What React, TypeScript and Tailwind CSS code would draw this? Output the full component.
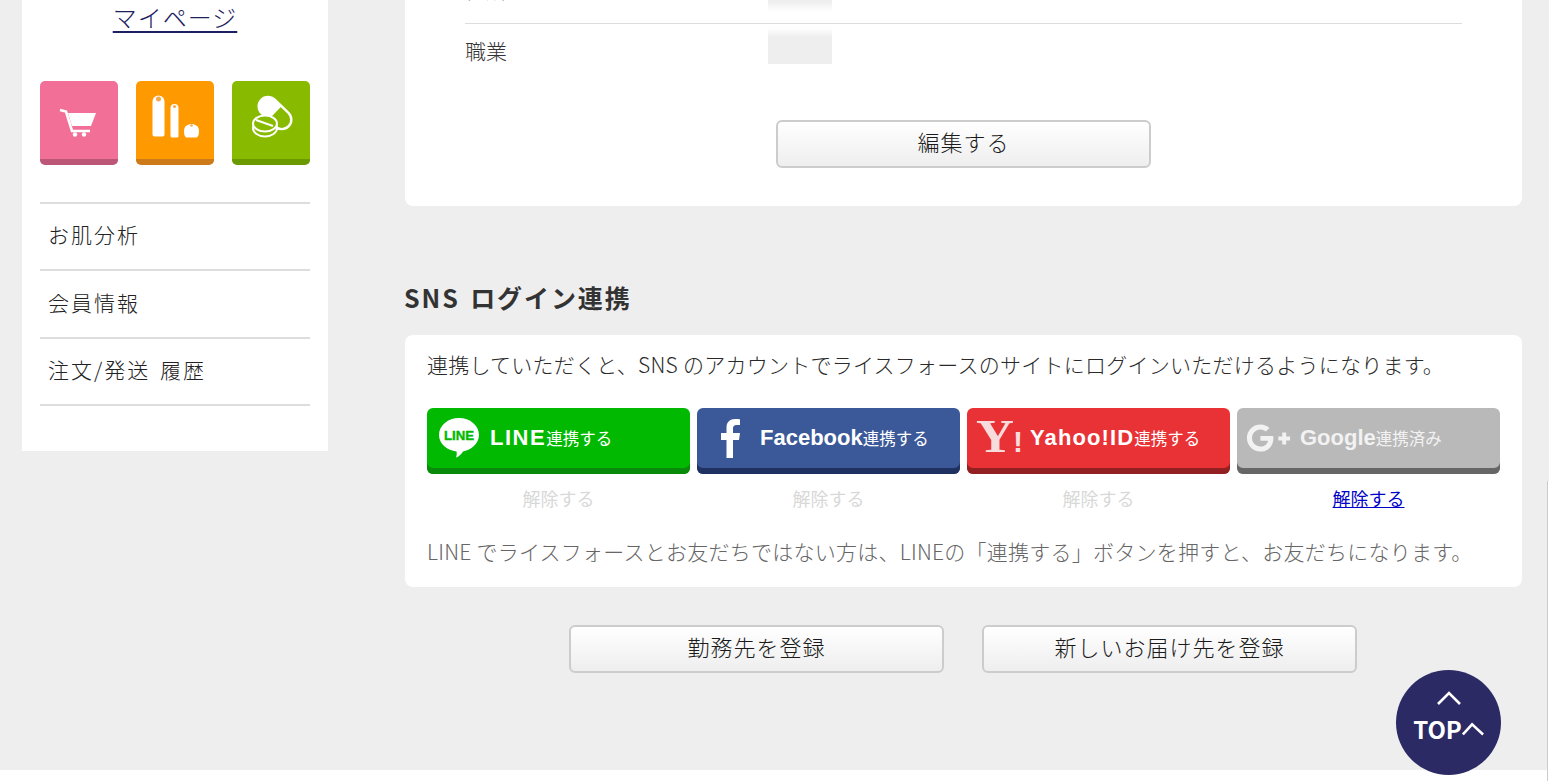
import { FaGooglePlusG } from 'react-icons/fa'

const CartIcon = () => (
  <svg viewBox="0 0 78 78" className="w-[78px] h-[78px]">
    <path d="M28 32H56L51 45H32Z" fill="#fff" />
    <path d="M20 29L26 30.500L32 50H50" fill="none" stroke="#fff" strokeWidth="2.600" />
    <circle cx="35" cy="53.500" r="2.200" fill="#fff" />
    <circle cx="44" cy="53.500" r="2.200" fill="#fff" />
  </svg>
)

const BottlesIcon = () => (
  <svg viewBox="0 0 78 78" className="w-[78px] h-[78px]">
    <path d="M16.500 20.500A6 6 0 0 1 28.500 20.500V53.500Q28.500 55.500 26.500 55.500H18.500Q16.500 55.500 16.500 53.500Z" fill="#fff" />
    <circle cx="22.500" cy="18" r="2.500" fill="#f5a94a" />
    <path d="M34.500 27A4 4 0 0 1 42.500 27V55Q42.500 56.500 41 56.500H36Q34.500 56.500 34.500 55Z" fill="#fff" />
    <circle cx="38.500" cy="25.500" r="1.500" fill="#f5a94a" />
    <path d="M48 50C48 45 52 43 55.500 43C59 43 63 45 63 50C63 54 62 56.500 60 56.500H51C49 56.500 48 54 48 50Z" fill="#fff" />
    <circle cx="55.500" cy="44.500" r="1.300" fill="#f5a94a" />
  </svg>
)

const PillsIcon = () => (
  <svg viewBox="0 0 78 78" className="w-[78px] h-[78px]">
    <g transform="rotate(44 43 32)">
      <rect x="24" y="22.500" width="38" height="19" rx="9.500" fill="#88bb00" stroke="#fff" strokeWidth="2.400" />
      <path d="M43 22.500H33.500A9.500 9.500 0 0 0 33.500 41.500H43Z" fill="#fff" />
    </g>
    <ellipse cx="33" cy="47" rx="12" ry="8.500" fill="#88bb00" stroke="#fff" strokeWidth="2" />
    <ellipse cx="33" cy="42.500" rx="12" ry="8" fill="#88bb00" stroke="#fff" strokeWidth="2" />
    <path d="M24 39L41 45" stroke="#fff" strokeWidth="2" />
  </svg>
)

const LineLogo = () => (
  <svg viewBox="0 0 44 44" className="w-[44px] h-[44px]">
    <path d="M22 2C33 2 42 9.500 42 19C42 28 33 34.500 26 35.500C25 37.500 21.500 41 19 41.500C19.800 39 20 37.500 19.500 35.500C10.500 34.500 2 28 2 19C2 9.500 11 2 22 2Z" fill="#fff" />
    <text x="22" y="24" textAnchor="middle" fontFamily="Liberation Sans" fontWeight="700" fontSize="13" fill="#00b900" stroke="#00b900" strokeWidth="0.400" textLength="30" lengthAdjust="spacingAndGlyphs">LINE</text>
  </svg>
)

const FacebookMark = () => (
  <svg viewBox="0 0 19 39" className="ml-[24px] mr-[20px] h-[39px] w-[19px]">
    <path d="M12 39V21H18L19 14H12V9.500C12 7.500 13 6 15.500 6H19V.3C18 .2 16 0 14 0C9 0 5.500 3 5.500 8.500V14H0V21H5.500V39Z" fill="#fff" />
  </svg>
)

const YahooMark = () => (
  <svg viewBox="0 0 48 36" className="ml-[9px] mr-[6px] h-9 w-12 overflow-visible">
    <text x="0" y="32" fontFamily="Liberation Serif" fontWeight="700" fontSize="46" fill="#f8dcdc" textLength="38" lengthAdjust="spacingAndGlyphs">Y</text>
    <text x="37" y="32" fontFamily="Liberation Sans" fontWeight="700" fontSize="30" fill="#f8dcdc">!</text>
  </svg>
)

const FormButton = ({ label }: { label: string }) => (
  <button className="h-12 w-[375px] rounded-md border-2 border-[#cccccc] bg-gradient-to-b from-white to-[#eeeeee] pb-[5px] text-[22px] font-light tracking-[1px] text-[#1a1a1a]">
    {label}
  </button>
)

type SnsProps = {
  bg: string
  icon: React.ReactNode
  name: string
  nameClass?: string
  suffix: string
  muted?: boolean
}

const SnsButton = ({ bg, icon, name, nameClass, suffix, muted }: SnsProps) => (
  <div>
    <div className={`${bg} relative flex h-[66px] items-center rounded-md pb-[6px] text-white`}>
      {icon}
      <span className={`font-['Liberation_Sans',sans-serif] text-[22px] font-bold leading-none ${nameClass ?? ''} ${muted ? 'text-[#f2f2f2]' : ''}`}>{name}</span>
      <span className={`text-[16.500px] leading-none ${muted ? 'text-[#f2f2f2]' : ''}`}>{suffix}</span>
    </div>
    <div className="mt-[13px] text-center text-[18px] leading-[22px]">
      {muted ? <a className="text-[#0000c8] underline">解除する</a> : <span className="text-[#d8d8d8]">解除する</span>}
    </div>
  </div>
)

export default function App() {
  return (
    <div className="relative flex h-[781px] w-full flex-col overflow-hidden bg-white font-['Noto_Sans_CJK_JP','Liberation_Sans',sans-serif] text-[#333333]">
      <div className="flex h-[770px] bg-[#eeeeee]">
        {/* sidebar */}
        <aside className="ml-[22px] h-[451px] w-[306px] bg-white px-[18px]">
          <div className="text-center">
            <a className="text-[24px] font-light leading-[34px] tracking-[1px] text-[#1d2060] underline underline-offset-[4px]">マイページ</a>
          </div>
          <div className="mt-[47px] flex gap-[18px]">
            <div className="w-[78px] h-[84px] rounded-[5px] bg-[#f27097] border-b-[6px] border-[#bc5677] overflow-hidden"><CartIcon /></div>
            <div className="w-[78px] h-[84px] rounded-[5px] bg-[#ff9900] border-b-[6px] border-[#cc7a1a] overflow-hidden"><BottlesIcon /></div>
            <div className="w-[78px] h-[84px] rounded-[5px] bg-[#88bb00] border-b-[6px] border-[#6a9a00] overflow-hidden"><PillsIcon /></div>
          </div>
          <ul className="mt-[37px] border-t-2 border-[#dddddd]">
            <li className="flex h-[67px] items-center border-b-2 border-[#dddddd] pb-[3px] pl-2 text-[21px] font-light tracking-[2px] text-[#222222]">お肌分析</li>
            <li className="flex h-[68px] items-center border-b-2 border-[#dddddd] pb-[3px] pl-2 text-[21px] font-light tracking-[2px] text-[#222222]">会員情報</li>
            <li className="flex h-[67px] items-center border-b-2 border-[#dddddd] pb-[3px] pl-2 text-[21px] font-light tracking-[2px] text-[#222222] [word-spacing:3px]">注文/発送 履歴</li>
          </ul>
        </aside>

        {/* main */}
        <main className="ml-[77px] w-[1117px]">
          <section className="-mt-[40px] rounded-lg bg-white px-[60px] pb-[38px]">
            <div className="flex h-[64px] border-b border-[#dddddd] text-[21px] font-light">
              <span className="mt-[19px] leading-[20px]">住所</span>
              <span className="ml-[261px] h-[52px] w-16 bg-gradient-to-b from-[#eeeeee] from-80% to-white"></span>
            </div>
            <div className="flex h-[96px] text-[21px] font-light">
              <span className="mt-[14px] leading-[24px]">職業</span>
              <span className="ml-[261px] mt-[4px] h-9 w-16 bg-gradient-to-b from-white to-[#eeeeee] to-25%"></span>
            </div>
            <div className="flex justify-center">
              <FormButton label="編集する" />
            </div>
          </section>

          <h2 className="-ml-[1px] mt-[74px] text-[25px] font-bold leading-[34px] tracking-[1.900px] [word-spacing:3px]">SNS ログイン連携</h2>

          <section className="mt-[21px] h-[252px] rounded-lg bg-white px-[22px]">
            <p className="pt-[15px] text-[21px] font-light leading-[28px] tracking-[0.25px] text-[#2a2a2a]">連携していただくと、SNS のアカウントでライスフォースのサイトにログインいただけるようになります。</p>
            <div className="mt-[30px] grid grid-cols-4 gap-[7px]">
              <SnsButton
                bg="bg-[#00b900] shadow-[inset_0_-6px_0_#0a8a0a]"
                icon={<span className="ml-[10px] mr-[9px] block h-[44px]"><LineLogo /></span>}
                name="LINE"
                nameClass="tracking-[1.500px]"
                suffix="連携する"
              />
              <SnsButton
                bg="bg-[#3b5998] shadow-[inset_0_-6px_0_#1f3160]"
                icon={<FacebookMark />}
                name="Facebook"
                suffix="連携する"
              />
              <SnsButton
                bg="bg-[#e93236] shadow-[inset_0_-6px_0_#921f22]"
                icon={<YahooMark />}
                name="Yahoo!ID"
                nameClass="tracking-[1.100px]"
                suffix="連携する"
              />
              <SnsButton
                bg="bg-[#b9b9b9] shadow-[inset_0_-6px_0_#666666]"
                icon={<FaGooglePlusG className="ml-[9px] mr-[9px] h-[40px] w-[45px] text-[#f2f2f2]" />}
                name="Google"
                suffix="連携済み"
                muted
              />
            </div>
            <p className="mt-[28px] text-[21px] font-light leading-[28px] tracking-[0.25px] text-[#666666]">LINE でライスフォースとお友だちではない方は、LINEの「連携する」ボタンを押すと、お友だちになります。</p>
          </section>

          <div className="mt-[38px] flex justify-center gap-[38px] pr-[1px]">
            <FormButton label="勤務先を登録" />
            <FormButton label="新しいお届け先を登録" />
          </div>
        </main>
      </div>
      <div className="flex-1 bg-white"></div>

      {/* back to top, floats over page */}
      <a className="absolute left-[1396px] top-[670px] flex h-[105px] w-[105px] flex-col items-center rounded-full bg-[#2b2a65] text-white">
        <svg viewBox="0 0 26 16" className="mt-[20px] h-4 w-[26px]">
          <path d="M2 14L13 3L24 14" fill="none" stroke="#fff" strokeWidth="2.600" />
        </svg>
        <span className="mt-[8px] flex items-center text-[24px] font-bold leading-[30px]">
          TOP
          <svg viewBox="0 0 24 14" className="h-[14px] w-[22px]">
            <path d="M1 13L11 2L23 13" fill="none" stroke="#fff" strokeWidth="2.800" />
          </svg>
        </span>
      </a>
      <div className="absolute left-[1547px] top-[481px] h-[300px] w-[2px] border-l border-[#cccccc] bg-white"></div>
    </div>
  )
}
